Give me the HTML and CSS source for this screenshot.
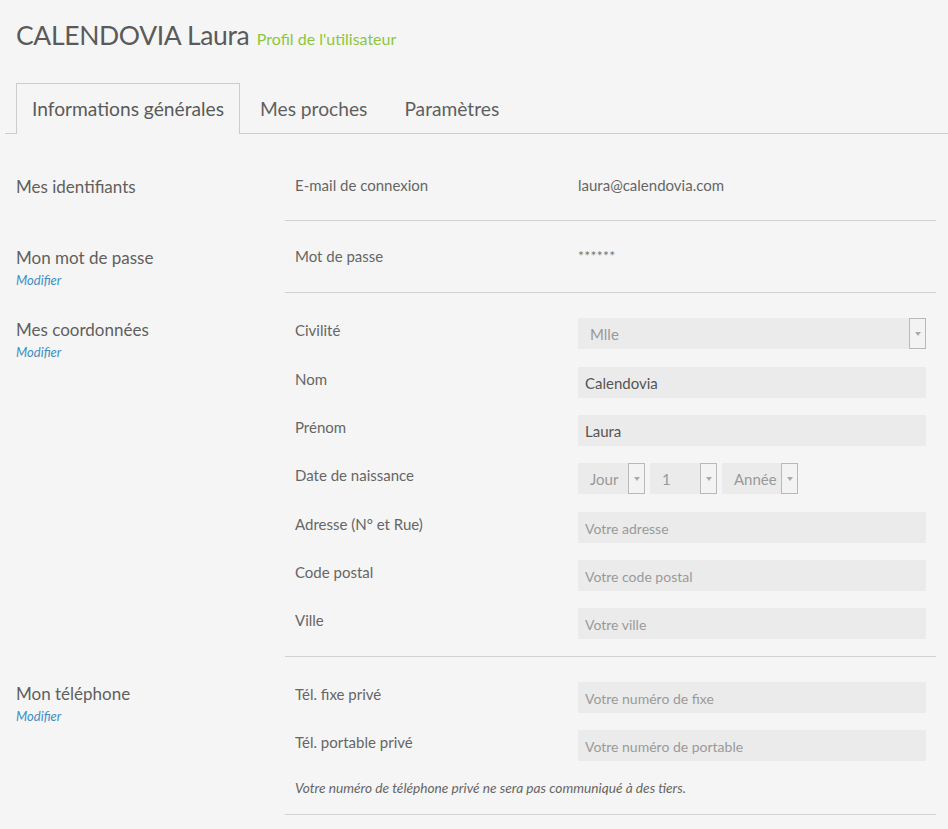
FILE: index.html
```html
<!DOCTYPE html>
<html lang="fr">
<head>
<meta charset="utf-8">
<title>Profil de l'utilisateur</title>
<link rel="stylesheet" href="styles.css">
</head>
<body>
<header class="page-head">
  <h1 class="title">CALENDOVIA Laura <small class="subtitle">Profil de l'utilisateur</small></h1>
</header>
<nav class="tabs">
  <a class="tab active">Informations générales</a>
  <a class="tab">Mes proches</a>
  <a class="tab">Paramètres</a>
</nav>
<main class="content">
  <section class="block">
    <div class="block-head"><h2>Mes identifiants</h2></div>
    <div class="block-body text">
      <div class="row"><span class="label">E-mail de connexion</span><span class="value">laura@calendovia.com</span></div>
    </div>
  </section>
  <section class="block">
    <div class="block-head"><h2>Mon mot de passe</h2><a class="edit">Modifier</a></div>
    <div class="block-body text tall">
      <div class="row"><span class="label">Mot de passe</span><span class="value stars">******</span></div>
    </div>
  </section>
  <section class="block">
    <div class="block-head"><h2>Mes coordonnées</h2><a class="edit">Modifier</a></div>
    <div class="block-body fields">
      <div class="field with-select"><span class="label">Civilité</span>
        <div class="select wide"><span class="sel-val">Mlle</span><span class="arrow"></span></div>
      </div>
      <div class="field"><span class="label">Nom</span><input class="input" value="Calendovia"></div>
      <div class="field"><span class="label">Prénom</span><input class="input" value="Laura"></div>
      <div class="field with-select"><span class="label">Date de naissance</span>
        <div class="dates">
          <div class="select day"><span class="sel-val">Jour</span><span class="arrow"></span></div>
          <div class="select day"><span class="sel-val">1</span><span class="arrow"></span></div>
          <div class="select year"><span class="sel-val">Année</span><span class="arrow"></span></div>
        </div>
      </div>
      <div class="field"><span class="label">Adresse (N° et Rue)</span><input class="input" placeholder="Votre adresse"></div>
      <div class="field"><span class="label">Code postal</span><input class="input" placeholder="Votre code postal"></div>
      <div class="field"><span class="label">Ville</span><input class="input" placeholder="Votre ville"></div>
    </div>
  </section>
  <section class="block">
    <div class="block-head"><h2>Mon téléphone</h2><a class="edit">Modifier</a></div>
    <div class="block-body fields">
      <div class="field"><span class="label">Tél. fixe privé</span><input class="input" placeholder="Votre numéro de fixe"></div>
      <div class="field"><span class="label">Tél. portable privé</span><input class="input" placeholder="Votre numéro de portable"></div>
      <p class="note">Votre numéro de téléphone privé ne sera pas communiqué à des tiers.</p>
    </div>
  </section>
</main>
</body>
</html>
```

FILE: styles.css
```css
* { box-sizing: border-box; }
html, body { margin: 0; padding: 0; }
body {
  background: #f5f5f5;
  font-family: Lato, "Noto Sans", sans-serif;
  color: #666;
  width: 948px;
  height: 829px;
  overflow: hidden;
}
.page-head { padding: 16px 16px 0; height: 83px; }
.title {
  margin: 0;
  font-size: 26.5px;
  font-weight: 400;
  color: #5a5a5a;
  line-height: 38px;
  letter-spacing: -0.35px;
}
.subtitle {
  font-size: 16px;
  color: #8cc63f;
  margin-left: 1px;
  letter-spacing: 0;
}
.tabs {
  display: flex;
  margin-left: 5px;
  padding-left: 11px;
  border-bottom: 1px solid #cccccc;
  height: 51px;
}
.tab {
  display: block;
  height: 51px;
  line-height: 50px;
  padding: 0 16px;
  margin-right: 3px;
  font-size: 19.2px;
  color: #5f5f5f;
  border: 1px solid transparent;
  border-bottom: none;
}
.tab.active {
  border-color: #cccccc;
  background: #f5f5f5;
  padding: 0 15px 0 15px;
  width: 224px;
  color: #5a5a5a;
}
.content { padding-top: 16px; }
.block {
  display: grid;
  grid-template-columns: 285px 651px;
}
.block-head { padding: 27px 0 0 16px; }
.block-head h2 {
  margin: 0;
  font-size: 17px;
  font-weight: 400;
  line-height: 20px;
  color: #5f5f5f;
}
.edit {
  display: block;
  font-size: 13px;
  font-style: italic;
  line-height: 24px;
  color: #3b8fc6;
}
.block-body {
  border-bottom: 1px solid #d2d2d2;
  padding: 25px 10px 0;
}
.block-body.text { padding-bottom: 25px; }
.block-body.text.tall { padding-bottom: 26px; }
.row, .field {
  display: grid;
  grid-template-columns: 283px 348px;
  font-size: 15px;
  line-height: 20px;
}
.field { margin-bottom: 17px; align-items: start; }
.field.with-select { margin-bottom: 18px; }
.field .label { padding-top: 2px; }
.stars { font-size: 14px; color: #777; letter-spacing: 0.3px; }
.input {
  height: 31px;
  width: 348px;
  border: none;
  outline: none;
  background: #ebebeb;
  padding: 0 7px;
  font-family: inherit;
  font-size: 15px;
  color: #555;
}
.input::placeholder { color: #9a9a9a; font-size: 14px; }
.select {
  height: 31px;
  background: #ebebeb;
  display: flex;
  align-items: stretch;
  justify-content: space-between;
  color: #999;
}
.sel-val { padding: 0 0 0 12px; line-height: 32px; font-size: 15px; }
.arrow {
  width: 17px;
  border: 1px solid #b9b9b9;
  background: #f3f3f3;
  position: relative;
}
.arrow::after {
  content: "";
  position: absolute;
  left: 50%;
  top: 50%;
  margin: -2px 0 0 -3px;
  border-left: 3px solid transparent;
  border-right: 3px solid transparent;
  border-top: 4px solid #aaa;
}
.dates { display: flex; gap: 5px; }
.select.day { width: 67px; }
.select.year { width: 76px; }
.note {
  margin: 0 0 16px;
  font-size: 13.7px;
  font-style: italic;
  line-height: 20px;
  color: #666;
}
```
